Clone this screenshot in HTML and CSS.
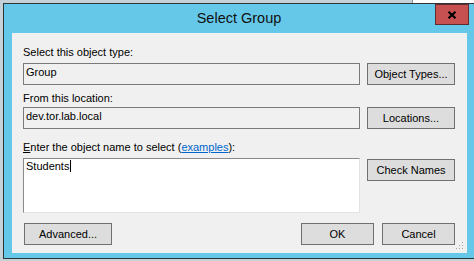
FILE: index.html
```
<!DOCTYPE html>
<html>
<head>
    <meta charset="utf-8">
    <title>Select Group</title>
    <link rel="stylesheet" href="styles.css">
</head>
<body>
    <div class="window">
        <div class="title-bar">
            <span class="title">Select Group</span>
            <button class="close-button" title="Close">
                <svg width="10" height="8" viewBox="0 0 10 8">
                    <path d="M1.5 0.8 L8.5 7.2 M8.5 0.8 L1.5 7.2" stroke="#000" stroke-width="2.2" fill="none"/>
                </svg>
            </button>
        </div>

        <div class="client">
            <div class="label label-type">Select this object type:</div>
            <div class="row">
                <div class="field">Group</div>
                <button class="btn">Object Types...</button>
            </div>

            <div class="label label-location">From this location:</div>
            <div class="row row-location">
                <div class="field">dev.tor.lab.local</div>
                <button class="btn">Locations...</button>
            </div>

            <div class="label label-names"><u>E</u>nter the object name to select (<a href="#">examples</a>):</div>
            <div class="row row-names">
                <div class="names-box">Students<span class="caret"></span></div>
                <button class="btn btn-check">Check Names</button>
            </div>

            <div class="actions">
                <button class="btn btn-advanced">Advanced...</button>
                <div class="actions-right">
                    <button class="btn btn-small">OK</button>
                    <button class="btn btn-small">Cancel</button>
                </div>
            </div>

            <svg class="size-grip" width="8" height="8" viewBox="0 0 8 8">
                <rect x="6" y="0" width="1" height="1" fill="#a8a8a8"/>
                <rect x="3" y="3" width="1" height="1" fill="#a8a8a8"/>
                <rect x="6" y="3" width="1" height="1" fill="#a8a8a8"/>
                <rect x="0" y="6" width="1" height="1" fill="#a8a8a8"/>
                <rect x="3" y="6" width="1" height="1" fill="#a8a8a8"/>
                <rect x="6" y="6" width="1" height="1" fill="#a8a8a8"/>
            </svg>
        </div>
    </div>
</body>
</html>
```

FILE: styles.css
```
* {
    margin: 0;
    padding: 0;
    box-sizing: border-box;
}

body {
    font-family: 'Liberation Sans', Arial, sans-serif;
    font-size: 11px;
    color: #000;
    background: linear-gradient(to right, #c4d1d7 412px, #8a9499 412px, #8a9499 413px, #ffffff 413px) top left / 100% 3px no-repeat, #c4d1d7;
    height: 261px;
    overflow: hidden;
}

.window {
    position: relative;
    margin: 3px 0 0 3px;
    height: 256px;
    background-color: #65c8e9;
    border: 1px solid #2f3436;
    border-right: none;
    display: flex;
    flex-direction: column;
}

/* title bar */
.title-bar {
    height: 29px;
    line-height: 29px;
    text-align: center;
    flex: none;
}

.title {
    font-size: 14.5px;
    color: #111;
}

.close-button {
    position: absolute;
    top: 0;
    right: 5px;
    width: 34px;
    height: 21px;
    background-color: #c75050;
    border: 1px solid #5e2c2c;
    display: flex;
    align-items: center;
    justify-content: center;
    cursor: pointer;
}

.close-button svg {
    display: block;
}

/* dialog body */
.client {
    position: relative;
    flex: 1;
    margin: 0 7px 5px 8px;
    padding: 12px 12px 8px 11px;
    background-color: #f0f0f0;
    display: flex;
    flex-direction: column;
}

.label {
    line-height: 15px;
    white-space: nowrap;
}

.label-location {
    margin-top: 6px;
}

.label-names {
    margin-top: 11px;
}

.label a {
    color: #0066cc;
}

.row {
    display: flex;
    gap: 7px;
    margin-top: 3px;
}

.row-location {
    margin-top: 1px;
}

.row-names {
    align-items: flex-start;
}

.field {
    width: 337px;
    height: 22px;
    flex: none;
    border: 1px solid #7a7a7a;
    padding: 0 2px;
    line-height: 16px;
    background-color: #f0f0f0;
    white-space: nowrap;
}

.names-box {
    width: 337px;
    height: 55px;
    flex: none;
    background-color: #fff;
    border-top: 1px solid #8a8a8a;
    border-left: 1px solid #8a8a8a;
    border-right: 1px solid #e3e3e3;
    border-bottom: 1px solid #e3e3e3;
    padding: 0 2px;
    line-height: 15px;
}

.caret {
    display: inline-block;
    width: 1px;
    height: 12px;
    background-color: #000;
    vertical-align: -2px;
    margin-left: 1px;
}

.btn {
    font: inherit;
    color: #000;
    width: 88px;
    height: 22px;
    line-height: 20px;
    flex: none;
    background-color: #dddddd;
    border: 1px solid #707070;
    text-align: center;
    cursor: pointer;
}

.btn-check {
    margin-top: 1px;
}

.actions {
    display: flex;
    justify-content: space-between;
    margin-top: 10px;
}

.btn-advanced {
    margin-left: 1px;
}

.actions-right {
    display: flex;
    gap: 8px;
}

.btn-small {
    width: 73px;
}

.size-grip {
    position: absolute;
    right: 3px;
    bottom: 3px;
}
```
